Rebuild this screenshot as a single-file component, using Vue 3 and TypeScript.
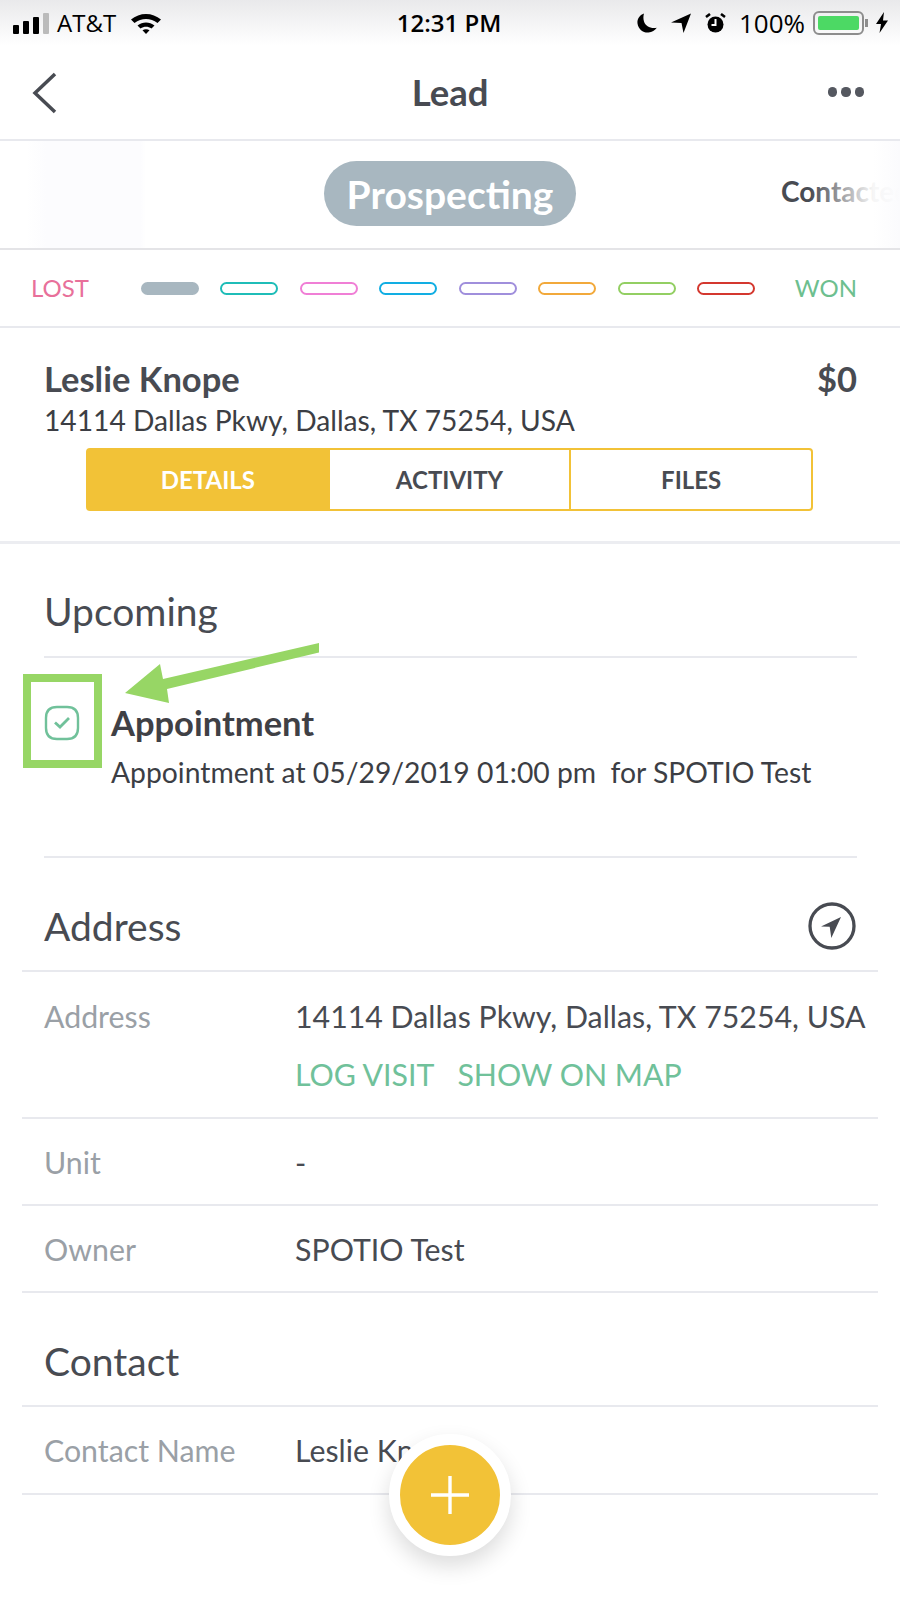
<script setup lang="ts">
interface Row {
    label: string;
    value: string;
}

const stages: string[] = ['#a8b7c0', '#1fbdb8', '#f07fd6', '#12aee3', '#a08fdc', '#f2a93b', '#93cf63', '#d4382f'];
const tabs: string[] = ['DETAILS', 'ACTIVITY', 'FILES'];
const addressRows: Row[] = [
    { label: 'Unit', value: '-' },
    { label: 'Owner', value: 'SPOTIO Test' },
];
</script>

<template>
    <div class="page">
        <div class="status">
            <div class="status-left">
                <span class="signal"><i></i><i></i><i></i><i class="off"></i></span>
                <span>AT&amp;T</span>
                <svg class="wifi" width="30" height="22" viewBox="0 0 30 22">
                    <path d="M0 7.500C8.500 0 21.500 0 30 7.500L26.500 11C19.500 5.500 10.500 5.500 3.500 11Z" fill="#000" />
                    <path d="M6.500 13.500C11.500 9.500 18.500 9.500 23.500 13.500L20.500 16.500C17 14 13 14 9.500 16.500Z" fill="#000" />
                    <path d="M11.500 18.300C13.500 17 16.500 17 18.500 18.300L15 22Z" fill="#000" />
                </svg>
            </div>
            <div class="status-time">12:31 PM</div>
            <div class="status-right">
                <svg width="20" height="20" viewBox="0 0 20 20">
                    <path d="M7 0.500C2.500 2 0 6 0.500 10.500C1.300 16.500 6.500 20 11.500 19.500C15 19.200 18 17.500 19.800 14.800C13.500 16 8.500 13 7 8.500C6.200 6 6.200 3 7 0.500Z" fill="#000" />
                </svg>
                <svg width="20" height="20" viewBox="0 0 20 20">
                    <path d="M0 9.500L20 0.500L12.500 20L10.500 10Z" fill="#000" />
                </svg>
                <svg width="21" height="20" viewBox="0 0 21 20">
                    <circle cx="10.500" cy="11.500" r="8" fill="#000" />
                    <path d="M10.500 6V12H6.500" stroke="#fff" stroke-width="2" fill="none" />
                    <path d="M1 4L5 1M20 4L16 1" stroke="#000" stroke-width="2.600" />
                </svg>
                <span class="pct">100%</span>
                <span class="battery"><i></i></span>
                <svg class="bolt" width="12" height="21" viewBox="0 0 12 21">
                    <path d="M8 0L0 12H5L3.500 21L12 8.500H7Z" fill="#000" />
                </svg>
            </div>
        </div>

        <div class="nav">
            <svg class="back" width="30" height="44" viewBox="0 0 30 44">
                <path d="M25 3L5 22L25 41" fill="none" stroke="#484b52" stroke-width="3.500" />
            </svg>
            <div class="nav-title">Lead</div>
            <div class="dots"><i></i><i></i><i></i></div>
        </div>

        <div class="stage">
            <div class="pill">Prospecting</div>
            <div class="next">Contacted</div>
            <div class="fade-left"></div>
            <div class="fade-right"></div>
        </div>

        <div class="progress">
            <span class="lost">LOST</span>
            <div class="steps">
                <i
                    v-for="(color, index) in stages"
                    :key="color"
                    :style="{ borderColor: color, background: index === 0 ? color : '#fff' }"
                ></i>
            </div>
            <span class="won">WON</span>
        </div>

        <div class="summary">
            <div class="summary-top">
                <span class="name">Leslie Knope</span>
                <span class="amount">$0</span>
            </div>
            <div class="summary-address">14114 Dallas Pkwy, Dallas, TX 75254, USA</div>
            <div class="tabs">
                <div v-for="(tab, index) in tabs" :key="tab" class="tab" :class="{ active: index === 0 }">{{ tab }}</div>
            </div>
        </div>

        <div class="upcoming">
            <h2 class="heading upcoming-heading">Upcoming</h2>
            <div class="appointment">
                <svg class="check" width="36" height="36" viewBox="0 0 36 36">
                    <path
                        d="M13 2H23C30 2 34 6 34 13V23C34 30 30 34 23 34H13C6 34 2 30 2 23V13C2 6 6 2 13 2Z"
                        fill="none"
                        stroke="#70c19a"
                        stroke-width="2.400"
                    />
                    <path d="M11 17.500L16 22L25 13" fill="none" stroke="#70c19a" stroke-width="2.800" />
                </svg>
                <div class="appointment-text">
                    <div class="appointment-title">Appointment</div>
                    <div class="appointment-sub">Appointment at 05/29/2019 01:00 pm&nbsp; for SPOTIO Test</div>
                </div>
            </div>
        </div>

        <div class="heading-row">
            <h2 class="heading">Address</h2>
            <svg width="48" height="48" viewBox="0 0 48 48">
                <circle cx="24" cy="24" r="22" fill="none" stroke="#484b52" stroke-width="3.300" />
                <path d="M33 15L13 24.500L21.700 24.700L23.300 36Z" fill="#484b52" />
            </svg>
        </div>
        <div class="row row-address">
            <span class="label">Address</span>
            <div>
                <div class="value">14114 Dallas Pkwy, Dallas, TX 75254, USA</div>
                <div class="links"><span>LOG VISIT</span><span>SHOW ON MAP</span></div>
            </div>
        </div>
        <div v-for="row in addressRows" :key="row.label" class="row">
            <span class="label">{{ row.label }}</span>
            <span class="value">{{ row.value }}</span>
        </div>

        <div class="heading-row contact-heading">
            <h2 class="heading">Contact</h2>
        </div>
        <div class="row row-last">
            <span class="label">Contact Name</span>
            <span class="value">Leslie Knope</span>
        </div>

        <!-- annotation drawn over the screenshot -->
        <div class="callout-box"></div>
        <svg class="callout-arrow" width="210" height="70" viewBox="0 0 210 70">
            <path d="M196 3L196 12.500L44 49L46 63L2 53L37 24L40 39Z" fill="#97d665" />
        </svg>

        <div class="fab">
            <svg width="40" height="40" viewBox="0 0 40 40">
                <path d="M20 1V39M1 20H39" stroke="#fff" stroke-width="3.400" />
            </svg>
        </div>
    </div>
</template>

<style>
html,
body {
    margin: 0;
    background: #fff;
}
</style>

<style scoped>
.page {
    position: relative;
    width: 900px;
    height: 1600px;
    overflow: hidden;
    background: #fff;
    color: #484b52;
    font-family: Lato, "Open Sans", sans-serif;
}

.status {
    height: 45px;
    padding: 0 12px 0 13px;
    display: flex;
    align-items: center;
    justify-content: space-between;
    position: relative;
    background: linear-gradient(#e9e9eb, #fff);
    color: #000;
    font-family: "Open Sans", "Liberation Sans", sans-serif;
    font-size: 24px;
}

.status-left,
.status-right {
    display: flex;
    align-items: center;
}

.status-left {
    gap: 8px;
}

.status-right {
    gap: 14px;
}

.signal {
    display: flex;
    align-items: flex-end;
    gap: 4px;
    height: 22px;
}

.signal i {
    width: 6px;
    background: #000;
    border-radius: 1px;
}

.signal i:nth-child(1) {
    height: 9px;
}

.signal i:nth-child(2) {
    height: 13px;
}

.signal i:nth-child(3) {
    height: 17px;
}

.signal i:nth-child(4) {
    height: 21px;
}

.signal .off {
    background: #bbb;
}

.wifi {
    margin-left: 7px;
}

.status-time {
    position: absolute;
    left: 0;
    right: 0;
    text-align: center;
    font-size: 24px;
    font-weight: 600;
    padding-right: 2px;
}

.pct {
    font-size: 26px;
    margin-left: -1px;
}

.battery {
    width: 51px;
    height: 24px;
    box-sizing: border-box;
    padding: 3px;
    border: 2px solid #8d8d8d;
    border-radius: 6px;
    margin-left: -6px;
    margin-right: -2px;
    position: relative;
}

.battery::after {
    content: '';
    position: absolute;
    right: -6px;
    top: 6px;
    width: 3px;
    height: 8px;
    background: #8d8d8d;
}

.battery i {
    display: block;
    height: 100%;
    background: #4cd964;
    border-radius: 2px;
}

.nav {
    height: 96px;
    box-sizing: border-box;
    padding: 0 36px 0 30px;
    display: flex;
    align-items: center;
    justify-content: space-between;
    position: relative;
    border-bottom: 2px solid #e8e9ee;
}

.nav-title {
    position: absolute;
    left: 0;
    right: 0;
    text-align: center;
    font-size: 36.500px;
    font-weight: 700;
}

.back {
    margin-top: 2px;
}

.dots {
    display: flex;
    gap: 4px;
}

.dots i {
    width: 9.300px;
    height: 9.300px;
    border-radius: 50%;
    background: #555860;
}

.stage {
    height: 109px;
    box-sizing: border-box;
    position: relative;
    display: flex;
    align-items: center;
    justify-content: center;
    overflow: hidden;
    border-bottom: 2px solid #e4e4e7;
}

.pill {
    width: 252px;
    height: 65px;
    margin-top: -2px;
    border-radius: 33px;
    background: #a8b7c0;
    color: #fff;
    font-size: 39px;
    font-weight: 700;
    display: flex;
    align-items: center;
    justify-content: center;
}

.next {
    position: absolute;
    left: 781px;
    top: 33px;
    white-space: nowrap;
    font-size: 28px;
    font-weight: 700;
}

.fade-left {
    position: absolute;
    left: 0;
    top: 0;
    bottom: 0;
    width: 146px;
    background: linear-gradient(90deg, #fff 18%, #fcfcfe 32%, #fcfcfe 96%, #fff);
}

.fade-right {
    position: absolute;
    right: 0;
    top: 0;
    bottom: 0;
    width: 90px;
    background: linear-gradient(90deg, rgba(255, 255, 255, 0), rgba(255, 255, 255, 0.95) 70%, #fbfbfd);
}

.progress {
    height: 78px;
    box-sizing: border-box;
    padding: 0 43px 0 31px;
    display: flex;
    align-items: center;
    justify-content: space-between;
    border-bottom: 2px solid #e8e9ee;
    font-size: 24px;
}

.lost {
    color: #e8709a;
    margin-top: -2px;
}

.won {
    color: #6dbf8f;
    margin-top: -2px;
}

.steps {
    display: flex;
    gap: 21.500px;
    margin-left: 12px;
}

.steps i {
    width: 58px;
    height: 13px;
    box-sizing: border-box;
    border: 2px solid;
    border-radius: 7px;
}

.summary {
    height: 216px;
    box-sizing: border-box;
    padding: 31px 43px 0 44px;
    border-bottom: 3px solid #ecedf1;
}

.summary-top {
    display: flex;
    justify-content: space-between;
    font-size: 34.500px;
    font-weight: 700;
    line-height: 40px;
}

.summary-address {
    font-size: 28.200px;
    line-height: 42px;
    color: #3c3e44;
}

.tabs {
    width: 727px;
    height: 63px;
    margin: 7px 0 0 42px;
    box-sizing: border-box;
    display: flex;
    border: 2px solid #f2c237;
    border-radius: 4px;
}

.tab {
    flex: 1;
    display: flex;
    align-items: center;
    justify-content: center;
    font-size: 24px;
    font-weight: 700;
    border-left: 2px solid #f2c237;
}

.tab:first-child {
    border-left: 0;
}

.tab.active {
    background: #f2c237;
    color: #fff;
}

.heading {
    margin: 0;
    font-size: 39px;
    font-weight: 400;
    line-height: 44px;
    color: #484b52;
}

.upcoming {
    height: 314px;
    box-sizing: border-box;
    margin: 0 43px 0 44px;
    padding-top: 45px;
    border-bottom: 2px solid #e8e9ee;
}

.upcoming-heading {
    padding-bottom: 23px;
    border-bottom: 2px solid #e8e9ee;
}

.appointment {
    display: flex;
    align-items: flex-start;
    gap: 31px;
    padding-top: 50px;
}

.check {
    flex: none;
    margin-top: -3px;
}

.appointment-text {
    margin-top: -4px;
}

.appointment-title {
    font-size: 34.500px;
    font-weight: 700;
    line-height: 38px;
    color: #3f4045;
}

.appointment-sub {
    margin-top: 13px;
    font-size: 28.300px;
    line-height: 34px;
    color: #3c3e44;
    white-space: nowrap;
}

.heading-row {
    height: 114px;
    box-sizing: border-box;
    margin: 0 22px;
    padding: 24px 22px 0 22px;
    display: flex;
    align-items: center;
    justify-content: space-between;
    border-bottom: 2px solid #e8e9ee;
}

.row {
    height: 87px;
    box-sizing: border-box;
    margin: 0 22px;
    padding: 0 0 0 22px;
    display: flex;
    align-items: center;
    border-bottom: 2px solid #e8e9ee;
    font-size: 30.300px;
}

.row-address {
    height: 147px;
    align-items: flex-start;
    padding-top: 26px;
}

.row-last {
    height: 88px;
}

.label {
    width: 251px;
    flex: none;
    color: #9aa0a6;
    line-height: 36px;
}

.value {
    color: #484b52;
    line-height: 36px;
    white-space: nowrap;
}

.links {
    display: flex;
    gap: 23px;
    margin-top: 22px;
    color: #70c19a;
    line-height: 36px;
}

.callout-box {
    position: absolute;
    left: 23px;
    top: 674px;
    width: 79px;
    height: 94px;
    box-sizing: border-box;
    border: 8px solid #97d665;
}

.callout-arrow {
    position: absolute;
    left: 123px;
    top: 640px;
}

.fab {
    position: absolute;
    left: 389px;
    top: 1434px;
    width: 122px;
    height: 122px;
    box-sizing: border-box;
    border: 11px solid #fff;
    border-radius: 50%;
    background: #f2c237;
    box-shadow: 0 10px 22px rgba(0, 0, 0, 0.14);
    display: flex;
    align-items: center;
    justify-content: center;
}
</style>
